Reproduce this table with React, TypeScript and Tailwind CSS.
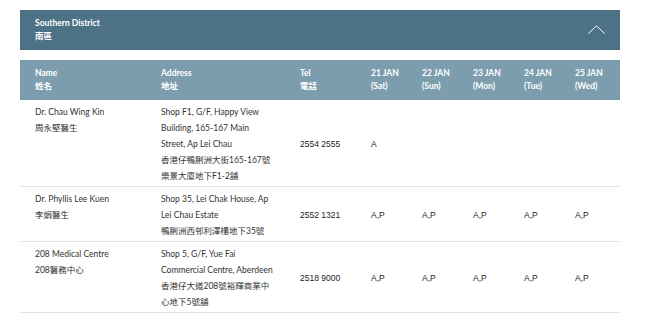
import React from "react";

/* ── Clinic data ─────────────────────────────────── */
const days = [
  { date: "21 JAN", day: "(Sat)" },
  { date: "22 JAN", day: "(Sun)" },
  { date: "23 JAN", day: "(Mon)" },
  { date: "24 JAN", day: "(Tue)" },
  { date: "25 JAN", day: "(Wed)" },
];

const clinics = [
  {
    name: "Dr. Chau Wing Kin",
    nameZh: "周永堅醫生",
    address: "Shop F1, G/F, Happy View Building, 165-167 Main Street, Ap Lei Chau",
    addressZh: "香港仔鴨脷洲大街165-167號樂景大廈地下F1-2舖",
    tel: "2554 2555",
    slots: ["A", "", "", "", ""],
  },
  {
    name: "Dr. Phyllis Lee Kuen",
    nameZh: "李娟醫生",
    address: "Shop 35, Lei Chak House, Ap Lei Chau Estate",
    addressZh: "鴨脷洲西邨利澤樓地下35號",
    tel: "2552 1321",
    slots: ["A,P", "A,P", "A,P", "A,P", "A,P"],
  },
  {
    name: "208 Medical Centre",
    nameZh: "208醫務中心",
    address: "Shop 5, G/F, Yue Fai Commercial Centre, Aberdeen",
    addressZh: "香港仔大道208號裕輝商業中心地下5號舖",
    tel: "2518 9000",
    slots: ["A,P", "A,P", "A,P", "A,P", "A,P"],
  },
];

const cols = "grid grid-cols-[126px_139px_71px_51px_51px_51px_51px_60px]";
const lato = "font-['Lato','Noto_Sans_CJK_TC',sans-serif]";
const arial = "font-['Liberation_Sans','Noto_Sans_CJK_TC',sans-serif]";

export default function App() {
  return (
    <div className={`w-[645px] h-[328px] bg-white ${lato}`}>
      <div className="ml-[20px] w-[600px] pt-[10px]">
        {/* District bar */}
        <div className="h-[40px] bg-[#4e7285] flex items-center justify-between pl-[15px] pr-[15px]">
          <div className="text-[8.5px] leading-[13px] font-bold text-white">
            <div>Southern District</div>
            <div>南區</div>
          </div>
          <svg width="17" height="9" viewBox="0 0 17 9" fill="none" className="mt-[-1px]">
            <path d="M0.5 8.5 L8.5 0.8 L16.5 8.5" stroke="#ffffff" strokeWidth="1" />
          </svg>
        </div>

        {/* Table head */}
        <div className={`${cols} mt-[10px] h-[40px] bg-[#7c9dad] items-center text-[8.5px] leading-[13px] font-bold text-white`}>
          <div className="pl-[15px]">
            <div>Name</div>
            <div>姓名</div>
          </div>
          <div className="pl-[15px]">
            <div>Address</div>
            <div>地址</div>
          </div>
          <div className="pl-[15px]">
            <div>Tel</div>
            <div>電話</div>
          </div>
          {days.map((d) => (
            <div key={d.date} className="pl-[15px] whitespace-nowrap">
              <div>{d.date}</div>
              <div>{d.day}</div>
            </div>
          ))}
        </div>

        {/* Rows */}
        {clinics.map((c) => (
          <div
            key={c.tel}
            className={`${cols} border-b border-[#e3e3e3] pt-[4px] pb-[2px] text-[8.5px] leading-[16px] text-[#333]`}
          >
            <div className="pl-[15px]">
              <div>{c.name}</div>
              <div>{c.nameZh}</div>
            </div>
            <div className="pl-[15px] pr-[12px]">
              <div>{c.address}</div>
              <div>{c.addressZh}</div>
            </div>
            <div className={`pl-[15px] flex items-center ${arial} text-[#222]`}>{c.tel}</div>
            {c.slots.map((s, i) => (
              <div key={i} className={`pl-[15px] flex items-center ${arial} text-[#222]`}>
                {s}
              </div>
            ))}
          </div>
        ))}
      </div>
    </div>
  );
}
